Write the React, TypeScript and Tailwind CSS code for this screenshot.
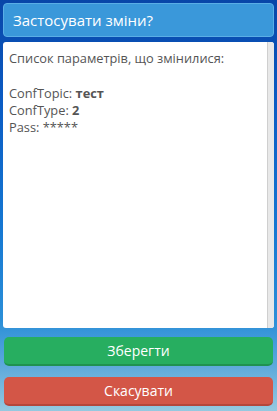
import React from 'react'

const changes = [
  { key: 'ConfTopic', value: 'тест' },
  { key: 'ConfType', value: '2' },
  { key: 'Pass', value: '*****', plain: true },
]

export default function App() {
  return (
    <div
      className="h-[411px] w-[277px] flex flex-col px-[3px] pt-[3px] pb-[5px] overflow-hidden"
      style={{
        fontFamily: '"Open Sans", "Noto Sans", sans-serif',
        background:
          'linear-gradient(180deg, #0846a8 0%, #0b5cc4 25%, #1577d2 55%, #2b8fd8 78%, #62acdc 90%, #95c9e0 100%)',
      }}
    >
      {/* Header */}
      <div className="h-[34px] flex items-center px-[9px] rounded-[4px] bg-[#3a98da] border border-[#5aaee6] text-white text-[15px]">
        Застосувати зміни?
      </div>

      {/* Changes list */}
      <div className="mt-[5px] flex-1 flex bg-white rounded-[3px] overflow-hidden">
        <div className="flex-1 px-[6px] pt-[8px] text-[12.8px] leading-[17px] text-[#555]">
          <div>Список параметрів, що змінилися:</div>
          <div className="h-[18px]" />
          {changes.map((c) => (
            <div key={c.key}>
              {c.key}: <span className={c.plain ? '' : 'font-bold text-[#555]'}>{c.value}</span>
            </div>
          ))}
        </div>
        <div className="w-[7px] bg-[#e8e8e8] border-l border-[#cfcfcf]" />
      </div>

      {/* Buttons */}
      <div className="mt-[9px] flex flex-col gap-[11px] px-[1px]">
        <button className="h-[29px] rounded-[5px] bg-[#27ae60] border-b-2 border-[#1f9250] text-white text-[14px]">
          Зберегти
        </button>
        <button className="h-[29px] rounded-[5px] bg-[#d35647] border-b-2 border-[#b5463a] text-white text-[14px]">
          Скасувати
        </button>
      </div>
    </div>
  )
}
